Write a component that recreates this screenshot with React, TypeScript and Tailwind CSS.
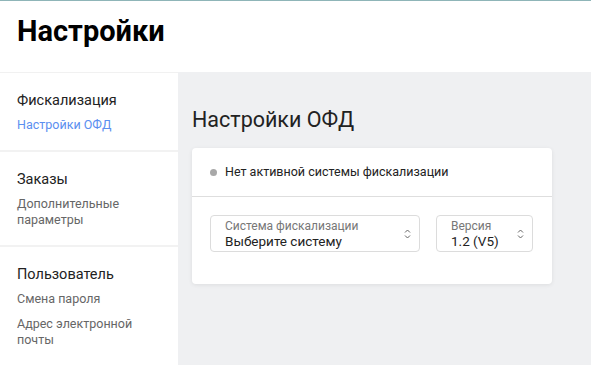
import React from "react";

const Chevrons = () => (
  <svg width="7" height="12" viewBox="0 0 7 12" className="text-[#666]">
    <path d="M1 4.5 L3.5 2 L6 4.5" fill="none" stroke="currentColor" strokeWidth="1" />
    <path d="M1 7.5 L3.5 10 L6 7.5" fill="none" stroke="currentColor" strokeWidth="1" />
  </svg>
);

const Select = ({ label, value, width }: { label: string; value: string; width: string }) => (
  <div
    className={`${width} flex h-[37px] items-center justify-between rounded border border-[#dcdcdc] pl-[14px] pr-[8px]`}
  >
    <div className="flex flex-col leading-[15px]">
      <span className="text-[12px] text-[#777]">{label}</span>
      <span className="text-[13.5px] text-[#222]">{value}</span>
    </div>
    <Chevrons />
  </div>
);

const sections = [
  { title: "Фискализация", links: [["Настройки ОФД"]], active: true },
  { title: "Заказы", links: [["Дополнительные", "параметры"]] },
  { title: "Пользователь", links: [["Смена пароля"], ["Адрес электронной", "почты"]] },
];

export default function App() {
  return (
    <div className="flex h-[365px] w-[591px] flex-col overflow-hidden" style={{ fontFamily: "Roboto, sans-serif" }}>
      <header className="h-[72px] shrink-0 border-t border-[#8fb5b8] bg-white pl-[17px] pt-[9px]">
        <h1 className="text-[29px] font-bold text-black">Настройки</h1>
      </header>
      <div className="flex flex-1 bg-[#eff0f2]">
        <aside className="w-[178px] border-t border-[#f1f1f1] bg-white">
          {sections.map((s, i) => (
            <div key={i} className="border-b-2 border-[#f2f2f2] pb-[17px] pl-[17px] pt-[17px]">
              <div className="mb-[5px] text-[14.5px] leading-[22px] text-[#222]">{s.title}</div>
              <div className="flex flex-col gap-[9px]">
                {s.links.map((l, j) => (
                  <div
                    key={j}
                    className={`text-[12.5px] leading-[16px] ${s.active ? "text-[#5b8ff0]" : "text-[#666]"}`}
                  >
                    {l.map((line, k) => (
                      <div key={k}>{line}</div>
                    ))}
                  </div>
                ))}
              </div>
            </div>
          ))}
        </aside>
        <main className="flex-1 pl-[14px] pt-[32px]">
          <h2 className="text-[21.5px] text-[#222]">Настройки ОФД</h2>
          <div className="mt-[12px] w-[360px] rounded bg-white shadow-[0_1px_4px_rgba(0,0,0,0.08)]">
            <div className="flex h-[49px] items-center gap-[8px] border-b border-[#dedede] pl-[18px]">
              <span className="h-[7px] w-[7px] rounded-full bg-[#a8a8a8]" />
              <span className="text-[12.5px] text-[#222]">Нет активной системы фискализации</span>
            </div>
            <div className="flex gap-[16px] px-[18px] pb-[32px] pt-[18px]">
              <Select label="Система фискализации" value="Выберите систему" width="w-[210px]" />
              <Select label="Версия" value="1.2 (V5)" width="w-[97px]" />
            </div>
          </div>
        </main>
      </div>
    </div>
  );
}
